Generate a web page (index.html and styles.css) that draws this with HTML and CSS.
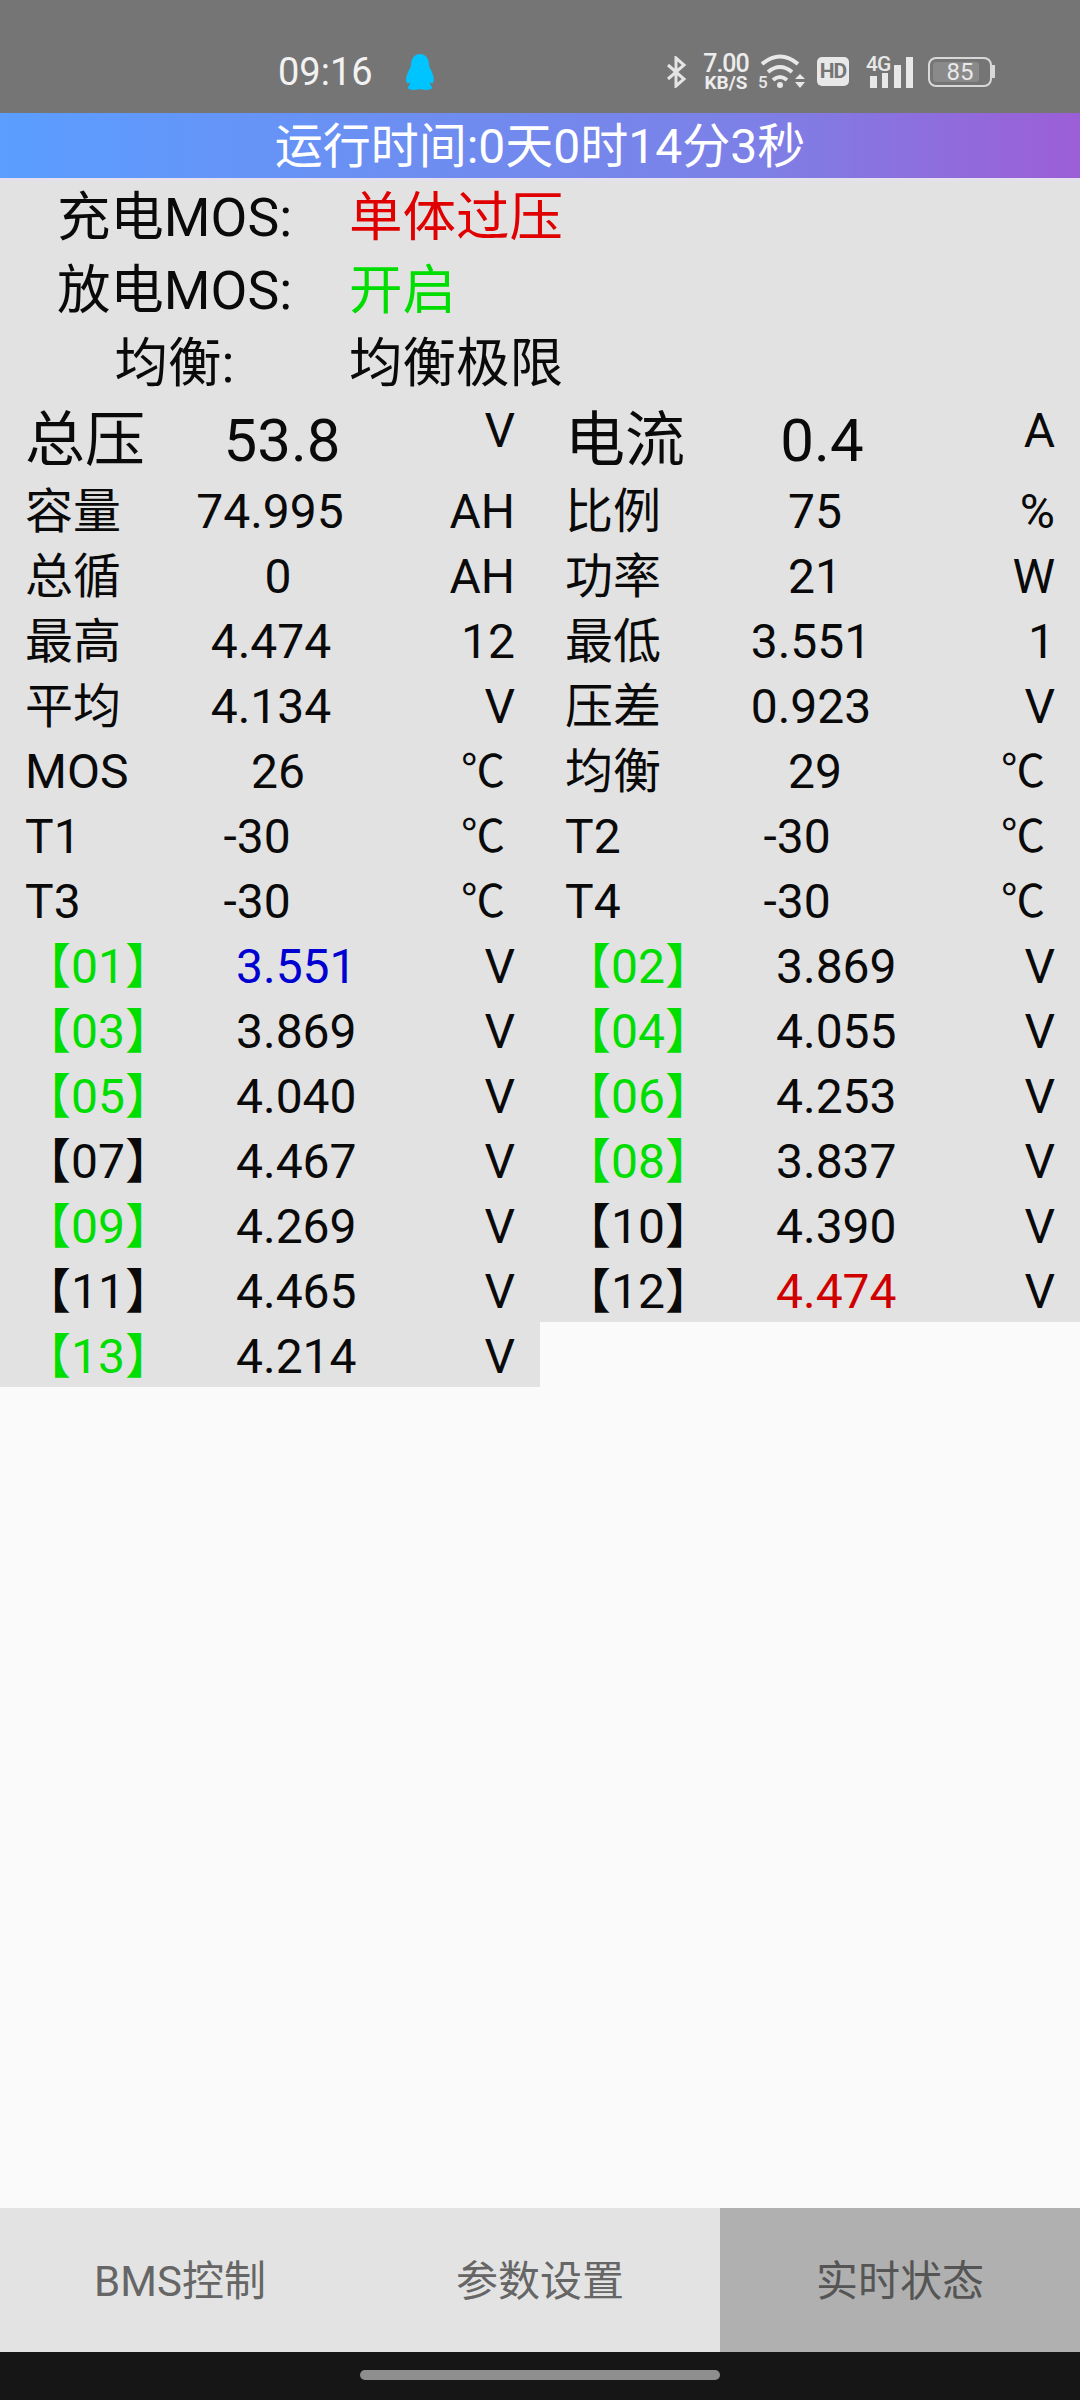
FILE: index.html
```html
<!DOCTYPE html>
<html lang="zh-CN">
<head>
  <meta charset="UTF-8">
  <meta name="viewport" content="width=device-width, initial-scale=1.0">
  <title>实时状态</title>
  <link rel="stylesheet" href="styles.css">
</head>
<body>
  <!-- 状态栏 -->
  <div class="status-bar">
    <span class="clock">09:16</span>
    <svg class="qq" width="32" height="38" viewBox="0 0 32 38"><path d="M16 1c6 0 9 5 9 11 0 2 1 3 2 5 2 4 4 10 2 13-1 1-2 0-3-1 0 2 1 4 2 5 1 2-3 3-6 3-3 0-5-1-6-1s-3 1-6 1c-3 0-7-1-6-3 1-1 2-3 2-5-1 1-2 2-3 1-2-3 0-9 2-13 1-2 2-3 2-5C7 6 10 1 16 1z" fill="#00c4ff"/></svg>
    <svg class="bt" width="22" height="32" viewBox="0 0 22 32"><path d="M3 9l16 14-8 7V2l8 7L3 23" fill="none" stroke="#e4e4e4" stroke-width="3"/></svg>
    <div class="speed"><span class="speed-num">7.00</span><span class="speed-unit">KB/S</span></div>
    <svg class="wifi" width="49" height="42" viewBox="0 -4 49 42"><g fill="none" stroke="#e8e8e8" stroke-width="4"><path d="M4 9Q22-6 40 9"/><path d="M10 17Q22 7 34 17"/><path d="M15 25Q22 19 29 25"/></g><circle cx="22" cy="30" r="3" fill="#e8e8e8"/><path d="M42 19l5 5H37zM42 33l5-6H37z" fill="#e8e8e8"/><text x="0" y="33" class="wifi-num">5</text></svg>
    <span class="hd">HD</span>
    <svg class="net" width="47" height="41" viewBox="0 -4 47 41"><text x="0" y="16" class="net-label">4G</text><g fill="#e8e8e8"><rect x="4" y="21" width="7" height="12"/><rect x="16" y="18" width="6" height="15"/><rect x="28" y="10" width="7" height="23"/><rect x="40" y="2" width="7" height="31"/></g></svg>
    <div class="battery"><div class="battery-fill"></div><span class="battery-num">85</span></div><span class="battery-cap"></span>
  </div>

  <div class="run-time">运行时间:0天0时14分3秒</div>

  <!-- 实时数据 -->
  <div class="mos-row"><span class="mos-label">充电MOS:</span><span class="red">单体过压</span></div>
  <div class="mos-row"><span class="mos-label">放电MOS:</span><span class="green">开启</span></div>
  <div class="mos-row"><span class="mos-label">均衡:</span><span>均衡极限</span></div>

  <div class="stats">
    <div class="stat stat-big"><span>总压</span><span class="val">53.8</span><span class="unit top">V</span></div>
    <div class="stat stat-big"><span>电流</span><span class="val">0.4</span><span class="unit top">A</span></div>
    <div class="stat"><span>容量</span><span class="val long">74.995</span><span class="unit">AH</span></div>
    <div class="stat"><span>比例</span><span class="val">75</span><span class="unit">%</span></div>
    <div class="stat"><span>总循</span><span class="val shift">0</span><span class="unit">AH</span></div>
    <div class="stat"><span>功率</span><span class="val">21</span><span class="unit">W</span></div>
    <div class="stat"><span>最高</span><span class="val dec">4.474</span><span class="unit">12</span></div>
    <div class="stat"><span>最低</span><span class="val dec">3.551</span><span class="unit">1</span></div>
    <div class="stat"><span>平均</span><span class="val dec">4.134</span><span class="unit">V</span></div>
    <div class="stat"><span>压差</span><span class="val dec">0.923</span><span class="unit">V</span></div>
    <div class="stat"><span>MOS</span><span class="val shift">26</span><span class="unit deg">℃</span></div>
    <div class="stat"><span>均衡</span><span class="val">29</span><span class="unit deg">℃</span></div>
    <div class="stat"><span>T1</span><span class="val temp">-30</span><span class="unit deg">℃</span></div>
    <div class="stat"><span>T2</span><span class="val temp">-30</span><span class="unit deg">℃</span></div>
    <div class="stat"><span>T3</span><span class="val temp">-30</span><span class="unit deg">℃</span></div>
    <div class="stat"><span>T4</span><span class="val temp">-30</span><span class="unit deg">℃</span></div>

    <div class="cell"><span class="no green">【01】</span><span class="blue">3.551</span><span class="unit">V</span></div>
    <div class="cell"><span class="no green">【02】</span><span>3.869</span><span class="unit">V</span></div>
    <div class="cell"><span class="no green">【03】</span><span>3.869</span><span class="unit">V</span></div>
    <div class="cell"><span class="no green">【04】</span><span>4.055</span><span class="unit">V</span></div>
    <div class="cell"><span class="no green">【05】</span><span>4.040</span><span class="unit">V</span></div>
    <div class="cell"><span class="no green">【06】</span><span>4.253</span><span class="unit">V</span></div>
    <div class="cell"><span class="no">【07】</span><span>4.467</span><span class="unit">V</span></div>
    <div class="cell"><span class="no green">【08】</span><span>3.837</span><span class="unit">V</span></div>
    <div class="cell"><span class="no green">【09】</span><span>4.269</span><span class="unit">V</span></div>
    <div class="cell"><span class="no">【10】</span><span>4.390</span><span class="unit">V</span></div>
    <div class="cell"><span class="no">【11】</span><span>4.465</span><span class="unit">V</span></div>
    <div class="cell"><span class="no">【12】</span><span class="dark-red">4.474</span><span class="unit">V</span></div>
    <div class="cell"><span class="no green">【13】</span><span>4.214</span><span class="unit">V</span></div>
  </div>

  <div class="spacer"></div>

  <!-- 底部标签 -->
  <div class="tabs">
    <div class="tab">BMS控制</div>
    <div class="tab">参数设置</div>
    <div class="tab active">实时状态</div>
  </div>
  <div class="nav-bar"><span class="home-pill"></span></div>
</body>
</html>
```
FILE: styles.css
```css
/* 基础 */
html, body {
  margin: 0;
}

body {
  display: flex;
  flex-direction: column;
  height: 2400px;
  background-color: #fafafa;
  color: #0a0a0a;
  font-family: Roboto, "Noto Sans CJK SC", sans-serif;
  overflow: hidden;
}

/* 状态栏 */
.status-bar {
  display: flex;
  align-items: center;
  height: 113px;
  padding: 30px 0 0 278px;
  box-sizing: border-box;
  background-color: #757575;
  color: #f2f2f2;
}

.clock {
  width: 126px;
  font-size: 38px;
}

.bt {
  margin-left: 229px;
}

.speed {
  display: flex;
  flex-direction: column;
  align-items: center;
  width: 46px;
  margin-left: 16px;
  color: #ececec;
  font-weight: 500;
}

.speed-num {
  font-size: 25px;
  letter-spacing: -1px;
  line-height: 21px;
}

.speed-unit {
  font-size: 19px;
  font-weight: 700;
  line-height: 17px;
}

.wifi {
  margin-left: 9px;
}

.wifi-num {
  font: 500 17px Roboto, sans-serif;
  fill: #e8e8e8;
}

.hd {
  width: 32px;
  height: 29px;
  margin-left: 10px;
  border-radius: 5px;
  background-color: #e8e8e8;
  color: #757575;
  font-size: 21px;
  font-weight: 700;
  letter-spacing: -1px;
  line-height: 29px;
  text-align: center;
}

.net {
  margin-left: 17px;
}

.net-label {
  font: 500 21px Roboto, sans-serif;
  letter-spacing: -1px;
  fill: #e8e8e8;
}

.battery {
  position: relative;
  width: 60px;
  height: 26px;
  margin-left: 15px;
  border: 2px solid #d8d8d8;
  border-radius: 8px;
  text-align: center;
}

.battery-fill {
  position: absolute;
  left: 3px;
  top: 3px;
  bottom: 3px;
  width: 46px;
  border-radius: 3px;
  background-color: #8a8a8a;
}

.battery-num {
  position: relative;
  color: #e8e8e8;
  font-size: 24px;
  line-height: 26px;
}

.battery-cap {
  width: 3px;
  height: 13px;
  background-color: #d8d8d8;
}

/* 运行时间 */
.run-time {
  height: 68px;
  border-bottom: 3px solid #e4e0ee;
  box-sizing: border-box;
  background: linear-gradient(90deg, #5a9eff, #7d80e6 70%, #9c5ed6);
  color: #fff;
  font-size: 48px;
  line-height: 67px;
  text-align: center;
}

/* 上方三行 */
.mos-row {
  display: grid;
  grid-template-columns: 349px 1fr;
  height: 73px;
  background-color: #e2e2e2;
  font-size: 53.5px;
  line-height: 74px;
}

.mos-label {
  text-align: center;
}

.red {
  color: #e00000;
}

.green {
  color: #00dd00;
}

.blue {
  color: #0000d0;
}

.dark-red {
  color: #d00000;
}

/* 数据表 */
.stats {
  display: grid;
  grid-template-columns: 1fr 1fr;
}

.stat,
.cell {
  display: grid;
  height: 65px;
  padding: 0 25px;
  background-color: #e2e2e2;
  font-size: 48px;
  line-height: 70px;
}

.stat {
  grid-template-columns: 140px 220px 1fr;
}

.stat-big {
  height: 77px;
  font-size: 60px;
  line-height: 82px;
}

.val {
  text-align: center;
}

.stat-big .val {
  padding-left: 14px;
}

.val.long {
  padding-right: 10px;
}

.val.dec {
  padding-right: 8px;
}

.val.shift {
  padding-left: 6px;
}

.val.temp {
  padding-right: 36px;
}

.unit {
  font-size: 48px;
  text-align: right;
}

.unit.top {
  line-height: 62px;
}

.unit.deg {
  padding-right: 10px;
  font-size: 44px;
}

.cell {
  grid-template-columns: 211px 170px 1fr;
}

.no {
  width: 150px;
  margin-left: -2px;
  text-align: center;
}

/* 底部 */
.spacer {
  flex: 1;
}

.tabs {
  display: flex;
  height: 144px;
  background-color: #e3e3e3;
}

.tab {
  flex: 1;
  color: #666;
  font-size: 42px;
  line-height: 148px;
  text-align: center;
}

.tab.active {
  background-color: #b0b0b0;
  color: #555;
}

.nav-bar {
  display: flex;
  justify-content: center;
  height: 48px;
  padding-top: 18px;
  box-sizing: border-box;
  background-color: #161616;
}

.home-pill {
  width: 360px;
  height: 10px;
  border-radius: 5px;
  background-color: #8e8e8e;
}
```
